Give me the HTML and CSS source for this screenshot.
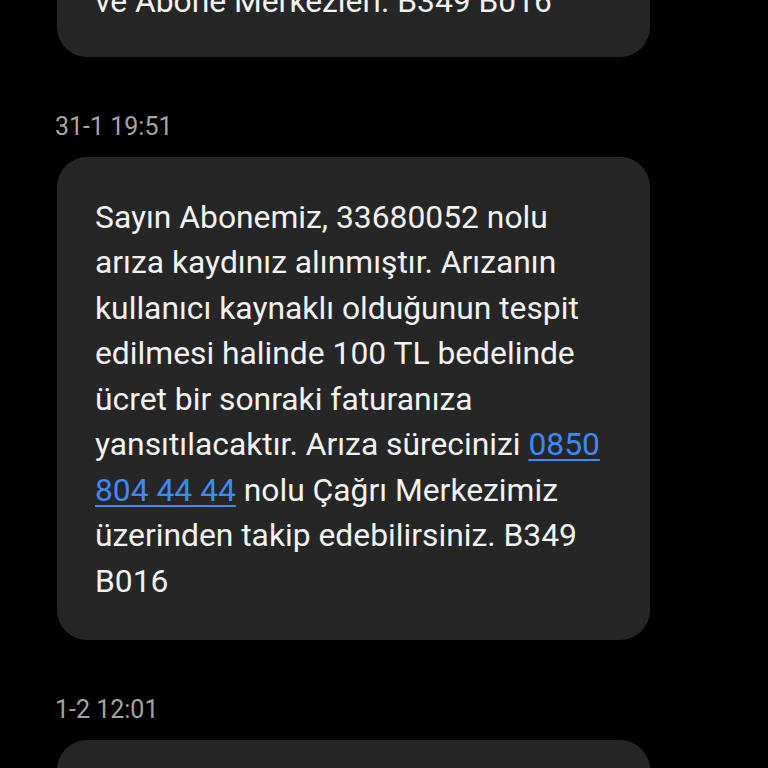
FILE: index.html
```html
<!DOCTYPE html>
<html lang="tr">
<head>
<meta charset="utf-8">
<link rel="stylesheet" href="styles.css">
</head>
<body>
<main class="thread">
  <div class="bubble bubble-top">
    <p class="msg">ve Abone Merkezleri. B349 B016</p>
  </div>
  <div class="stamp">31-1 19:51</div>
  <div class="bubble">
    <p class="msg">Sayın Abonemiz, 33680052 nolu<br>arıza kaydınız alınmıştır. Arızanın<br>kullanıcı kaynaklı olduğunun tespit<br>edilmesi halinde 100 TL bedelinde<br>ücret bir sonraki faturanıza<br>yansıtılacaktır. Arıza sürecinizi <a class="link" href="#">0850</a><br><a class="link" href="#">804 44 44</a> nolu Çağrı Merkezimiz<br>üzerinden takip edebilirsiniz. B349<br>B016</p>
  </div>
  <div class="stamp">1-2 12:01</div>
  <div class="bubble bubble-bottom">
    <p class="msg">&nbsp;</p>
  </div>
</main>
</body>
</html>
```

FILE: styles.css
```css
html, body {
  margin: 0;
  padding: 0;
  background: #000;
  height: 100%;
  overflow: hidden;
}
body {
  font-family: Roboto, "Noto Sans", sans-serif;
}
.thread {
  display: flex;
  flex-direction: column;
  align-items: flex-start;
  padding-left: 57px;
  margin-top: -59px;
}
.bubble {
  box-sizing: border-box;
  width: 593px;
  background: #262626;
  border-radius: 30px;
  padding: 38px 38px 36px;
}
.bubble-top {
  padding-bottom: 32px;
}
.msg {
  margin: 0;
  color: #f2f2f2;
  font-size: 31.8px;
  line-height: 45.5px;
  white-space: nowrap;
}
.link {
  color: #3d8af7;
  text-decoration: underline;
  text-decoration-thickness: 2px;
  text-underline-offset: 4px;
}
.stamp {
  color: #a3a3a3;
  font-size: 25px;
  line-height: 30px;
  margin: 55px 0 15px -2px;
}
.bubble-bottom {
  height: 200px;
}
```
